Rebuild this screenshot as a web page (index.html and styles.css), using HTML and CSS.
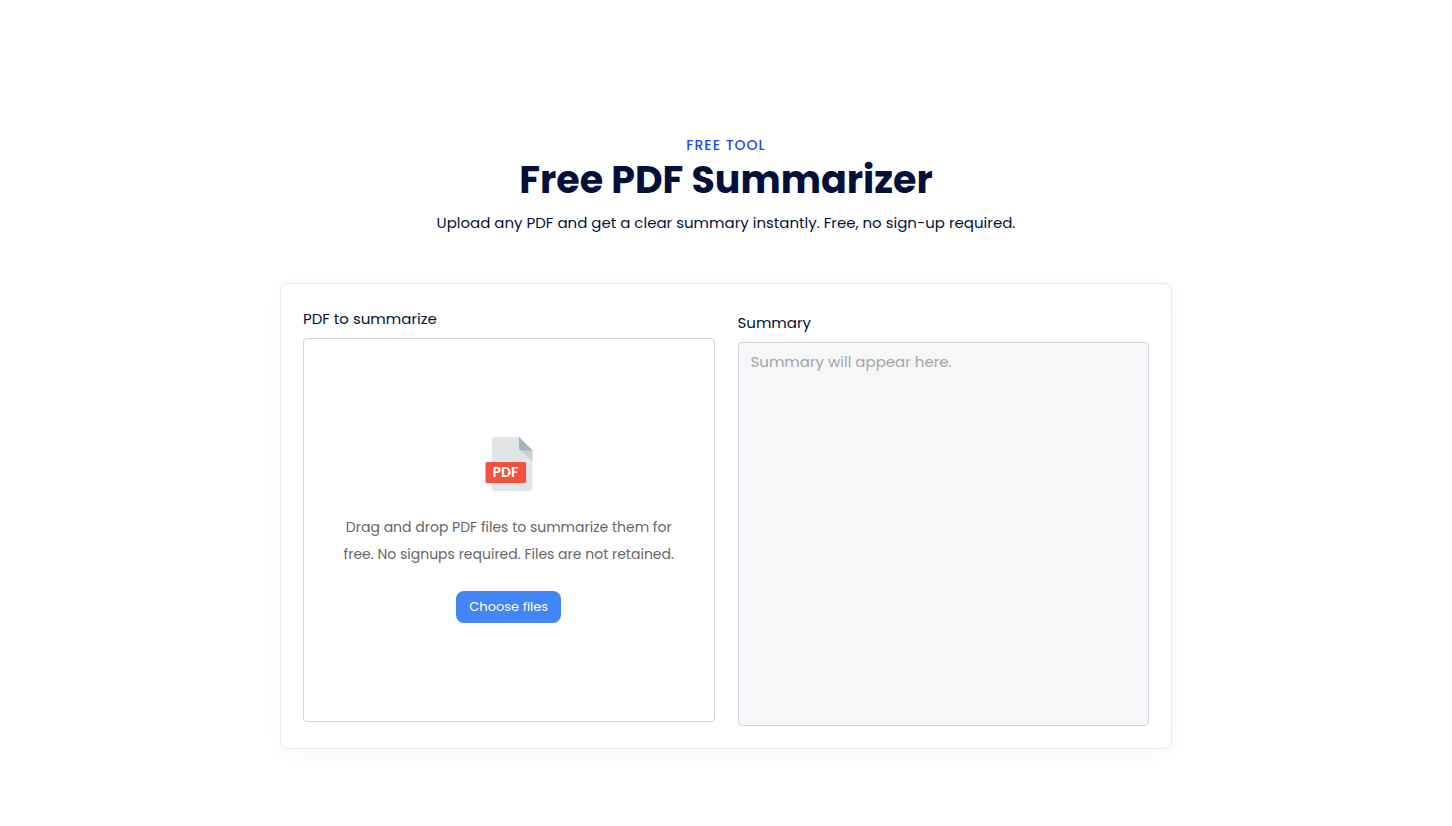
FILE: index.html
```html
<!DOCTYPE html>
<html lang="en">
<head>
<meta charset="utf-8">
<meta name="viewport" content="width=device-width, initial-scale=1">
<title>Free PDF Summarizer</title>
<link rel="stylesheet" href="styles.css">
</head>
<body>
<main class="page">
  <header class="intro">
    <p class="eyebrow">FREE TOOL</p>
    <h1 class="title">Free PDF Summarizer</h1>
    <p class="lead">Upload any PDF and get a clear summary instantly. Free, no sign-up required.</p>
  </header>
  <section class="card">
    <div class="column">
      <h2 class="label">PDF to summarize</h2>
      <div class="dropzone">
        <svg class="pdf-icon" viewBox="0 0 48 54" width="48" height="54" aria-hidden="true">
          <path fill="#e1e5e8" d="M9 0H34L47.500 13.500V51.500Q47.500 54 45 54H9.500Q7 54 7 51.500V2.500Q7 0 9 0Z"/>
          <path fill="#c9d1d8" d="M35 13.500H47.500V24Z"/>
          <path fill="#a7b1b8" d="M34 0L47.500 13.500H36Q34 13.500 34 11.500Z"/>
          <path fill="#cbdde2" d="M7 46H41V25.500H42V47H7Z"/>
          <rect fill="#f2533f" x="0.500" y="25" width="40.500" height="21" rx="1.500"/>
          <text class="pdf-icon-text" x="20.500" y="40" text-anchor="middle">PDF</text>
        </svg>
        <p class="hint">Drag and drop PDF files to summarize them for free. No signups required. Files are not retained.</p>
        <button class="choose" type="button">Choose files</button>
      </div>
    </div>
    <div class="column column-summary">
      <label class="label" for="summary">Summary</label>
      <textarea class="summary" id="summary" placeholder="Summary will appear here." readonly></textarea>
    </div>
  </section>
</main>
</body>
</html>
```
FILE: styles.css
```css
* {
  box-sizing: border-box;
}

body {
  margin: 0;
  background: #fff;
  color: #03103a;
  font-family: Poppins, Inter, sans-serif;
  font-size: 15px;
}

.page {
  max-width: 892px;
  margin: 0 auto;
  padding: 134px 0 64px;
}

.intro {
  text-align: center;
}

.eyebrow {
  margin: 0;
  color: #1447f5;
  font-size: 14px;
  font-weight: 500;
  line-height: 22px;
  letter-spacing: 1px;
}

.title {
  margin: 0;
  color: #03103a;
  font-size: 38px;
  font-weight: 700;
  line-height: 48px;
}

.lead {
  margin: 6px 0 0;
  line-height: 26px;
}

.card {
  display: flex;
  gap: 23px;
  margin-top: 47px;
  padding: 22px;
  border: 1px solid #e8e9eb;
  border-radius: 8px;
  box-shadow: 0 4px 24px rgba(0, 0, 0, 0.04);
}

.column {
  display: flex;
  flex: 1 1 0;
  flex-direction: column;
  min-width: 0;
}

.column-summary {
  padding-top: 4px;
}

.label {
  margin: 0 0 6px;
  font-size: 15px;
  font-weight: 400;
  line-height: 26px;
}

.dropzone,
.summary {
  height: 384px;
  border: 1px solid #cfd5de;
  border-radius: 4px;
}

.dropzone {
  display: flex;
  flex-direction: column;
  align-items: center;
  justify-content: center;
  margin-bottom: 4px;
  padding: 0 24px;
}

.pdf-icon-text {
  fill: #fff;
  font-size: 14px;
  font-weight: 600;
}

.hint {
  max-width: 352px;
  margin: 23px 0;
  color: #666;
  font-size: 14px;
  line-height: 27px;
  text-align: center;
}

.choose {
  padding: 0 13px;
  border: 0;
  border-radius: 8px;
  background: #4285f4;
  color: #fff;
  font: inherit;
  font-size: 13px;
  line-height: 32px;
}

.summary {
  width: 100%;
  padding: 6px 12px;
  background: #f5f7f9;
  color: #03103a;
  font: inherit;
  line-height: 26px;
  outline: 0;
  resize: none;
}

.summary::placeholder {
  color: #a4a4a4;
  opacity: 1;
}
```
